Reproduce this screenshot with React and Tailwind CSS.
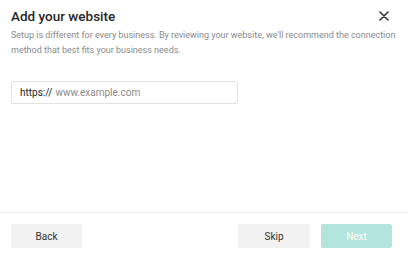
import React, { useState } from 'react';

function App() {
  const [url, setUrl] = useState('');

  return (
    <div className="w-[408px] h-[257px] bg-white flex flex-col text-[#222]" style={{ fontFamily: 'Roboto, "Liberation Sans", sans-serif' }}>
      <div className="flex-1 pl-[11px] pr-[12px] pt-[7px]">
        <div className="flex items-center justify-between">
          <h1 className="text-[13.5px] leading-[18px] font-medium text-[#262626]">Add your website</h1>
          <button className="w-[14px] h-[14px] mr-[5px] flex items-center justify-center text-[#333]">
            <svg width="10" height="10" viewBox="0 0 10 10" fill="none" stroke="currentColor" strokeWidth="1.6" strokeLinecap="round">
              <path d="M1 1 L9 9 M9 1 L1 9" />
            </svg>
          </button>
        </div>
        <p className="mt-[3px] text-[9px] leading-[15px] text-[#8a8a8a]">
          Setup is different for every business. By reviewing your website, we'll recommend the connection method that best fits your business needs.
        </p>
        <div className="mt-[23px] w-[227px] h-[23px] border border-[#e2e2e2] rounded-[2px] flex items-center px-[8px] text-[10px]">
          <span className="text-[#222]">https://</span>
          <input
            value={url}
            onChange={(e) => setUrl(e.target.value)}
            placeholder="www.example.com"
            className="flex-1 ml-[3px] outline-none bg-transparent placeholder:text-[#8a8a8a] text-[10px]"
          />
        </div>
      </div>
      <div className="h-[45px] border-t border-[#ececec] flex items-start pt-[11px] px-[11px]">
        <button className="w-[71px] h-[24px] bg-[#f2f2f2] rounded-[2px] text-[10px] text-[#333]">Back</button>
        <div className="flex-1" />
        <button className="w-[72px] h-[24px] bg-[#f2f2f2] rounded-[2px] text-[10px] text-[#333]">Skip</button>
        <button className="ml-[11px] mr-[5px] w-[71px] h-[24px] bg-[#b2e6dc] rounded-[2px] text-[10px] text-white" disabled>Next</button>
      </div>
    </div>
  );
}

export default App;
